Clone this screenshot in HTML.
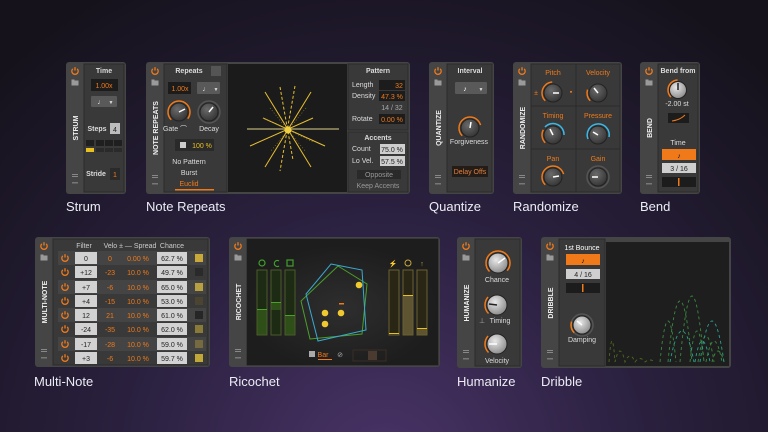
<!DOCTYPE html>
<html><head><meta charset="utf-8"><style>
html,body{margin:0;padding:0;width:768px;height:432px;overflow:hidden;background:#16131d}
svg{display:block}
text{font-family:"Liberation Sans",sans-serif}
</style></head><body>
<svg width="768" height="432" viewBox="0 0 768 432" xmlns="http://www.w3.org/2000/svg">
<defs>
<radialGradient id="bg" cx="384" cy="470" r="560" gradientUnits="userSpaceOnUse">
<stop offset="0" stop-color="#4a3468"/><stop offset="0.45" stop-color="#2b2140"/><stop offset="1" stop-color="#15121b"/>
</radialGradient>
<radialGradient id="kn" cx="0.4" cy="0.35" r="0.7"><stop offset="0" stop-color="#6a6a6a"/><stop offset="1" stop-color="#333"/></radialGradient>
<radialGradient id="knl" cx="0.4" cy="0.35" r="0.7"><stop offset="0" stop-color="#e8e8e8"/><stop offset="1" stop-color="#888"/></radialGradient>
<radialGradient id="disp" cx="0.5" cy="0.55" r="0.5"><stop offset="0" stop-color="#2e2e2e"/><stop offset="1" stop-color="#1d1d1d"/></radialGradient>
<g id="pw"><path d="M-2.2,-2.2 A3.2,3.2 0 1 0 2.2,-2.2" fill="none" stroke="#f07a1a" stroke-width="1.3"/><line x1="0" y1="-3.8" x2="0" y2="-0.5" stroke="#f07a1a" stroke-width="1.3"/></g>
<g id="fd"><rect x="-3.5" y="-2.5" width="7" height="5" fill="#9a9a9a"/><rect x="-3.5" y="-3.5" width="3" height="1.5" fill="#9a9a9a"/></g>
<g id="bi"><rect x="-3" y="-2" width="6" height="1" fill="#888"/><rect x="-3" y="0" width="6" height="1" fill="#888"/><rect x="-3" y="6" width="6" height="1.5" fill="#777"/></g>
</defs>
<rect width="768" height="432" fill="url(#bg)"/>

<g font-size="7" fill="#ddd" text-anchor="middle">
<!-- ===== STRUM ===== -->
<rect x="66" y="62" width="60" height="132" rx="3" fill="#454545"/>
<rect x="84" y="64" width="40" height="128" fill="#393939" stroke="#2a2a2a"/>
<use href="#pw" x="75" y="71"/><use href="#fd" x="75" y="83"/><use href="#bi" x="75" y="176"/>
<text transform="translate(78,128) rotate(-90)" font-size="7" font-weight="bold" fill="#eee">STRUM</text>
<text x="104" y="73" font-weight="bold">Time</text>
<rect x="91" y="79" width="27" height="12" fill="#1c1c1c"/><text x="104" y="88" fill="#f07a1a">1.00x</text>
<rect x="91" y="96" width="26" height="11" rx="1" fill="#595959"/><text x="101" y="104" fill="#fff">♩</text><text x="111" y="104" font-size="5">▼</text>
<text x="97" y="131" font-weight="bold">Steps</text><rect x="110" y="123" width="10" height="11" fill="#bdbdbd"/><text x="115" y="132" fill="#222">4</text>
<g fill="#1f1f1f"><rect x="86" y="140" width="8" height="6"/><rect x="96" y="140" width="8" height="6"/><rect x="105" y="140" width="8" height="6"/><rect x="114" y="140" width="8" height="6"/></g>
<rect x="86" y="148" width="8" height="4" fill="#e8c020"/><g fill="#2a2a2a"><rect x="96" y="148" width="8" height="4"/><rect x="105" y="148" width="8" height="4"/><rect x="114" y="148" width="8" height="4"/></g>
<text x="96" y="176" font-weight="bold">Stride</text><rect x="110" y="168" width="10" height="12" fill="#2a2a2a"/><text x="115" y="177" fill="#f07a1a">1</text>

<!-- ===== NOTE REPEATS ===== -->
<rect x="146" y="62" width="264" height="132" rx="3" fill="#454545"/>
<rect x="164" y="64" width="63" height="128" fill="#393939" stroke="#2a2a2a"/>
<use href="#pw" x="155" y="71"/><use href="#fd" x="155" y="83"/><use href="#bi" x="155" y="177"/>
<text transform="translate(158,128) rotate(-90)" font-weight="bold" fill="#eee">NOTE REPEATS</text>
<text x="189" y="73" font-weight="bold">Repeats</text><rect x="211" y="66" width="10" height="10" fill="#555"/>
<rect x="168" y="82" width="23" height="12" fill="#1c1c1c"/><text x="180" y="91" fill="#f07a1a">1.00x</text>
<rect x="197" y="82" width="23" height="12" rx="1" fill="#595959"/><text x="206" y="91" fill="#fff">♩</text><text x="216" y="91" font-size="5">▼</text>
<circle cx="179" cy="112" r="11" fill="none" stroke="#f07a1a" stroke-width="1.5" stroke-dasharray="50 70" transform="rotate(135 179 112)"/>
<circle cx="179" cy="112" r="9" fill="url(#kn)" stroke="#222"/><line x1="179" y1="112" x2="185" y2="109" stroke="#fff" stroke-width="1.5"/>
<circle cx="209" cy="112" r="11" fill="none" stroke="#555" stroke-width="1.5"/>
<circle cx="209" cy="112" r="9" fill="url(#kn)" stroke="#222"/><line x1="209" y1="112" x2="213" y2="107" stroke="#fff" stroke-width="1.5"/>
<text x="175" y="131">Gate ⌒</text><text x="209" y="131">Decay</text>
<rect x="175" y="139" width="39" height="12" fill="#2a2a2a"/><rect x="180" y="142" width="6" height="6" fill="#ccc"/><text x="202" y="148" fill="#e8c020">100 %</text>
<text x="189" y="164">No Pattern</text><text x="189" y="175">Burst</text><text x="189" y="186" fill="#f07a1a">Euclid</text>
<rect x="175" y="189" width="39" height="1.5" fill="#f07a1a"/>
<rect x="228" y="64" width="119" height="128" fill="#1b1b1b"/>
<g stroke="#e8c030" stroke-width="1">
<line x1="265" y1="92" x2="311" y2="167"/><line x1="311" y1="92" x2="265" y2="167"/>
<line x1="263" y1="118" x2="325" y2="146"/><line x1="313" y1="118" x2="250" y2="146"/>
<line x1="280" y1="87" x2="293" y2="160" stroke-dasharray="3 2"/><line x1="295" y1="86" x2="280" y2="171" stroke-dasharray="3 2"/>
</g>
<g stroke="#a08a30" stroke-width="0.6" stroke-dasharray="1 2"><line x1="263" y1="118" x2="313" y2="142"/><line x1="270" y1="108" x2="306" y2="152"/><line x1="306" y1="108" x2="270" y2="152"/></g>
<line x1="247" y1="129" x2="339" y2="129" stroke="#ddd088" stroke-width="1"/>
<circle cx="288" cy="130" r="3.5" fill="#f0d040"/>
<rect x="348" y="64" width="60" height="66" fill="#393939" stroke="#2a2a2a"/>
<rect x="348" y="132" width="60" height="60" fill="#393939" stroke="#2a2a2a"/>
<text x="378" y="73" font-weight="bold">Pattern</text>
<g text-anchor="start"><text x="352" y="87">Length</text><text x="352" y="98">Density</text><text x="352" y="121">Rotate</text><text x="352" y="151">Count</text><text x="352" y="163">Lo Vel.</text></g>
<rect x="379" y="80" width="26" height="10" fill="#1c1c1c"/><text x="399" y="88" fill="#f07a1a">32</text>
<rect x="379" y="91" width="26" height="10" fill="#1c1c1c"/><text x="392" y="99" fill="#f07a1a">47.3 %</text>
<text x="392" y="110" fill="#aaa">14 / 32</text>
<rect x="379" y="114" width="26" height="10" fill="#1c1c1c"/><text x="392" y="122" fill="#f07a1a">0.00 %</text>
<text x="378" y="140" font-weight="bold">Accents</text>
<rect x="380" y="144" width="25" height="10" fill="#cfcfcf"/><text x="392" y="152" fill="#222">75.0 %</text>
<rect x="380" y="156" width="25" height="10" fill="#cfcfcf"/><text x="392" y="164" fill="#222">57.5 %</text>
<rect x="357" y="170" width="44" height="9" fill="#2a2a2a"/><text x="379" y="177" fill="#999">Opposite</text>
<text x="378" y="188" fill="#999">Keep Accents</text>

<!-- ===== QUANTIZE ===== -->
<rect x="429" y="62" width="65" height="132" rx="3" fill="#454545"/>
<rect x="447" y="64" width="45" height="128" fill="#393939" stroke="#2a2a2a"/>
<use href="#pw" x="438" y="71"/><use href="#fd" x="438" y="83"/><use href="#bi" x="438" y="177"/>
<text transform="translate(441,128) rotate(-90)" font-weight="bold" fill="#eee">QUANTIZE</text>
<text x="470" y="73" font-weight="bold">Interval</text>
<rect x="455" y="82" width="32" height="12" rx="1" fill="#595959"/><text x="465" y="91" fill="#fff">♪</text><text x="481" y="91" font-size="5">▼</text>
<circle cx="470" cy="128" r="11" fill="none" stroke="#f07a1a" stroke-width="1.5" stroke-dasharray="40 70" transform="rotate(135 470 128)"/>
<circle cx="470" cy="128" r="9" fill="url(#kn)" stroke="#222"/><line x1="470" y1="128" x2="471" y2="122" stroke="#fff" stroke-width="1.5"/>
<text x="469" y="144">Forgiveness</text>
<rect x="452" y="166" width="36" height="11" fill="#241c16"/><text x="470" y="174" fill="#e08040">Delay Offs</text>

<!-- ===== RANDOMIZE ===== -->
<rect x="513" y="62" width="109" height="132" rx="3" fill="#454545"/>
<use href="#pw" x="522" y="71"/><use href="#fd" x="522" y="83"/><use href="#bi" x="522" y="177"/>
<text transform="translate(525,128) rotate(-90)" font-weight="bold" fill="#eee">RANDOMIZE</text>
<g fill="#393939" stroke="#2a2a2a">
<rect x="531" y="64" width="45" height="42"/><rect x="576" y="64" width="44" height="42"/>
<rect x="531" y="106" width="45" height="43"/><rect x="576" y="106" width="44" height="43"/>
<rect x="531" y="149" width="45" height="43"/><rect x="576" y="149" width="44" height="43"/></g>
<g fill="#f07a1a"><text x="553" y="75">Pitch</text><text x="598" y="75">Velocity</text><text x="553" y="118">Timing</text><text x="598" y="118">Pressure</text><text x="553" y="161">Pan</text><text x="598" y="161">Gain</text><text x="536" y="95">±</text><text x="571" y="94">▪</text></g>
<g>
<circle cx="553" cy="93" r="11" fill="none" stroke="#f07a1a" stroke-width="1.5" stroke-dasharray="25 70" transform="rotate(135 553 93)"/><circle cx="553" cy="93" r="9" fill="url(#kn)" stroke="#222"/><line x1="553" y1="93" x2="559" y2="93" stroke="#fff" stroke-width="1.5"/>
<circle cx="598" cy="93" r="11" fill="none" stroke="#f07a1a" stroke-width="1.5" stroke-dasharray="12 70" transform="rotate(135 598 93)"/><circle cx="598" cy="93" r="9" fill="url(#kn)" stroke="#222"/><line x1="598" y1="93" x2="594" y2="88" stroke="#fff" stroke-width="1.5"/>
<circle cx="553" cy="135" r="11" fill="none" stroke="#f07a1a" stroke-width="1.5" stroke-dasharray="14 70" transform="rotate(135 553 135)"/><path d="M545,127 A11,11 0 0 1 564,135" fill="none" stroke="#3bb8e6" stroke-width="1.5"/><circle cx="553" cy="135" r="9" fill="url(#kn)" stroke="#222"/><line x1="553" y1="135" x2="550" y2="129" stroke="#fff" stroke-width="1.5"/>
<path d="M588,139 A11,11 0 1 1 609,137" fill="none" stroke="#3bb8e6" stroke-width="1.5"/><circle cx="598" cy="135" r="9" fill="url(#kn)" stroke="#222"/><line x1="598" y1="135" x2="593" y2="132" stroke="#fff" stroke-width="1.5"/>
<circle cx="553" cy="177" r="11" fill="none" stroke="#f07a1a" stroke-width="1.5" stroke-dasharray="40 70" transform="rotate(135 553 177)"/><circle cx="553" cy="177" r="9" fill="url(#kn)" stroke="#222"/><line x1="553" y1="177" x2="559" y2="176" stroke="#fff" stroke-width="1.5"/>
<circle cx="598" cy="177" r="11" fill="none" stroke="#555" stroke-width="1.5"/><circle cx="598" cy="177" r="9" fill="url(#kn)" stroke="#222"/><line x1="598" y1="177" x2="592" y2="177" stroke="#fff" stroke-width="1.5"/>
</g>

<!-- ===== BEND ===== -->
<rect x="640" y="62" width="60" height="132" rx="3" fill="#454545"/>
<rect x="658" y="64" width="40" height="128" fill="#393939" stroke="#2a2a2a"/>
<use href="#pw" x="649" y="71"/><use href="#fd" x="649" y="83"/><use href="#bi" x="649" y="177"/>
<text transform="translate(652,128) rotate(-90)" font-weight="bold" fill="#eee">BEND</text>
<text x="678" y="73" font-weight="bold">Bend from</text>
<circle cx="678" cy="90" r="10" fill="none" stroke="#f07a1a" stroke-width="1.5" stroke-dasharray="23 70" transform="rotate(135 678 90)"/>
<circle cx="678" cy="90" r="8.5" fill="url(#knl)" stroke="#222"/><line x1="678" y1="90" x2="678" y2="83" stroke="#222" stroke-width="1.5"/>
<text x="677" y="106">-2.00 st</text>
<rect x="668" y="113" width="21" height="10" fill="#1c1c1c"/><path d="M672,121 Q680,120 685,115" stroke="#f07a1a" fill="none"/>
<text x="678" y="145">Time</text>
<rect x="662" y="149" width="34" height="11" fill="#f07a1a"/><text x="679" y="158" fill="#111">♪</text>
<rect x="662" y="163" width="34" height="10" fill="#cfcfcf"/><text x="679" y="171" fill="#222">3 / 16</text>
<rect x="662" y="177" width="34" height="10" fill="#1c1c1c"/><rect x="678" y="178" width="1.5" height="8" fill="#f07a1a"/>

<!-- ===== MULTI-NOTE ===== -->
<rect x="35" y="237" width="175" height="130" rx="3" fill="#454545"/>
<rect x="53" y="239" width="155" height="126" fill="#393939" stroke="#2a2a2a"/>
<use href="#pw" x="44" y="246"/><use href="#fd" x="44" y="258"/><use href="#bi" x="44" y="351"/>
<text transform="translate(47,302) rotate(-90)" font-weight="bold" fill="#eee">MULTI-NOTE</text>
<text x="84" y="248" fill="#ccc">Filter</text><text x="130" y="248" fill="#ccc">Velo ± — Spread</text><text x="172" y="248" fill="#ccc">Chance</text>
</g>
<g font-size="7" text-anchor="middle">
<g fill="#444"><rect x="58" y="251" width="148" height="14"/><rect x="58" y="280" width="148" height="14"/><rect x="58" y="308" width="148" height="14"/><rect x="58" y="337" width="148" height="14"/></g>
<use href="#pw" x="65" y="258"/><use href="#pw" x="65" y="272"/><use href="#pw" x="65" y="287"/><use href="#pw" x="65" y="301"/><use href="#pw" x="65" y="315"/><use href="#pw" x="65" y="329"/><use href="#pw" x="65" y="344"/><use href="#pw" x="65" y="358"/>
<g fill="#d2d2d2">
<rect x="75" y="252" width="22" height="12"/><rect x="75" y="266" width="22" height="12"/><rect x="75" y="281" width="22" height="12"/><rect x="75" y="295" width="22" height="12"/><rect x="75" y="309" width="22" height="12"/><rect x="75" y="323" width="22" height="12"/><rect x="75" y="338" width="22" height="12"/><rect x="75" y="352" width="22" height="12"/>
<rect x="157" y="252" width="30" height="12"/><rect x="157" y="266" width="30" height="12"/><rect x="157" y="281" width="30" height="12"/><rect x="157" y="295" width="30" height="12"/><rect x="157" y="309" width="30" height="12"/><rect x="157" y="323" width="30" height="12"/><rect x="157" y="338" width="30" height="12"/><rect x="157" y="352" width="30" height="12"/></g>
<g fill="#222"><text x="86" y="261">0</text><text x="86" y="275">+12</text><text x="86" y="290">+7</text><text x="86" y="304">+4</text><text x="86" y="318">12</text><text x="86" y="332">-24</text><text x="86" y="347">-17</text><text x="86" y="361">+3</text>
<text x="172" y="261">62.7 %</text><text x="172" y="275">49.7 %</text><text x="172" y="290">65.0 %</text><text x="172" y="304">53.0 %</text><text x="172" y="318">61.0 %</text><text x="172" y="332">62.0 %</text><text x="172" y="347">59.0 %</text><text x="172" y="361">59.7 %</text></g>
<g fill="#f07a1a"><text x="110" y="261">0</text><text x="110" y="275">-23</text><text x="110" y="290">-6</text><text x="110" y="304">-15</text><text x="110" y="318">21</text><text x="110" y="332">-35</text><text x="110" y="347">-28</text><text x="110" y="361">-6</text>
<text x="138" y="261">0.00 %</text><text x="138" y="275">10.0 %</text><text x="138" y="290">10.0 %</text><text x="138" y="304">10.0 %</text><text x="138" y="318">10.0 %</text><text x="138" y="332">10.0 %</text><text x="138" y="347">10.0 %</text><text x="138" y="361">10.0 %</text></g>
<rect x="195" y="254" width="8" height="8" fill="#c8a838"/><rect x="195" y="268" width="8" height="8" fill="#2a2a2a"/><rect x="195" y="283" width="8" height="8" fill="#b8a040"/><rect x="195" y="297" width="8" height="8" fill="#4a4430"/><rect x="195" y="311" width="8" height="8" fill="#262626"/><rect x="195" y="325" width="8" height="8" fill="#8a7a38"/><rect x="195" y="340" width="8" height="8" fill="#756a40"/><rect x="195" y="354" width="8" height="8" fill="#c0a838"/>
</g>

<!-- ===== RICOCHET ===== -->
<g font-size="7" text-anchor="middle" fill="#ddd">
<rect x="229" y="237" width="211" height="130" rx="3" fill="#454545"/>
<rect x="247" y="239" width="191" height="126" fill="#222" stroke="#2a2a2a"/>
<rect x="247" y="239" width="191" height="126" fill="url(#disp)"/>
<use href="#pw" x="238" y="246"/><use href="#fd" x="238" y="258"/><use href="#bi" x="238" y="351"/>
<text transform="translate(241,302) rotate(-90)" font-weight="bold" fill="#eee">RICOCHET</text>
<g fill="none" stroke="#3fa02a" stroke-width="1.2"><circle cx="262" cy="263" r="3"/><path d="M279,261 A3,3 0 1 0 279,266"/><rect x="287" y="260" width="6" height="6"/></g>
<g fill="#1d2a14" stroke="#4a5a2a"><rect x="257" y="270" width="10" height="65"/><rect x="271" y="270" width="10" height="65"/><rect x="285" y="270" width="10" height="65"/></g>
<g fill="#2e5018"><rect x="257.5" y="310" width="9" height="24.5"/><rect x="271.5" y="302" width="9" height="8"/><rect x="285.5" y="316" width="9" height="18.5"/></g>
<g fill="#4aa02a"><rect x="257" y="309" width="10" height="1"/><rect x="271" y="302" width="10" height="1"/><rect x="285" y="315" width="10" height="1"/></g>
<g fill="#c8a838"><text x="393" y="266">⚡</text><circle cx="408" cy="263" r="3" fill="none" stroke="#c8a838"/><text x="422" y="266">↑</text></g>
<g fill="#2a2616" stroke="#6a6030"><rect x="389" y="270" width="10" height="65"/><rect x="403" y="270" width="10" height="65"/><rect x="417" y="270" width="10" height="65"/></g>
<g fill="#5e5432"><rect x="403.5" y="295" width="9" height="39.5"/><rect x="417.5" y="329" width="9" height="5.5"/></g>
<g fill="#e8c020"><rect x="389" y="333" width="10" height="1"/><rect x="403" y="295" width="10" height="1"/><rect x="417" y="328" width="10" height="1"/></g>
<polygon points="338,266 367,284 362,334 310,339 301,301" fill="none" stroke="#4aa02a" stroke-width="1"/>
<polygon points="331,264 362,270 366,330 318,341 306,294" fill="none" stroke="#3aaad0" stroke-width="1"/>
<g fill="#f0c830"><circle cx="359" cy="285" r="3.3"/><circle cx="325" cy="313" r="3.3"/><circle cx="341" cy="313" r="3.3"/><circle cx="325" cy="324" r="3.3"/></g>
<rect x="339" y="303" width="5" height="1.5" fill="#f07a1a"/>
<rect x="309" y="351" width="6" height="6" fill="#aaa"/><text x="323" y="357" fill="#f07a1a">Bar</text><rect x="318" y="359" width="14" height="1" fill="#f07a1a"/><text x="340" y="357" fill="#aaa">⊘</text>
<rect x="353" y="350" width="33" height="11" fill="none" stroke="#3a2e26"/><rect x="368" y="351" width="9" height="9" fill="#4a3a30"/>

<!-- ===== HUMANIZE ===== -->
<rect x="457" y="237" width="65" height="131" rx="3" fill="#454545"/>
<rect x="475" y="239" width="45" height="127" fill="#393939" stroke="#2a2a2a"/>
<use href="#pw" x="466" y="246"/><use href="#fd" x="466" y="258"/><use href="#bi" x="466" y="352"/>
<text transform="translate(469,303) rotate(-90)" font-weight="bold" fill="#eee">HUMANIZE</text>
<circle cx="498" cy="263" r="12" fill="none" stroke="#f07a1a" stroke-width="1.5" stroke-dasharray="55 80" transform="rotate(135 498 263)"/>
<circle cx="498" cy="263" r="10" fill="url(#knl)" stroke="#222"/><line x1="498" y1="263" x2="505" y2="258" stroke="#fff" stroke-width="1.5"/>
<text x="497" y="282">Chance</text>
<circle cx="497" cy="305" r="12" fill="none" stroke="#f07a1a" stroke-width="1.5" stroke-dasharray="18 80" transform="rotate(135 497 305)"/>
<circle cx="497" cy="305" r="10" fill="url(#knl)" stroke="#222"/><line x1="497" y1="305" x2="489" y2="304" stroke="#222" stroke-width="1.5"/>
<text x="500" y="323">Timing</text><text x="482" y="323" fill="#aaa">⊥</text>
<circle cx="497" cy="344" r="12" fill="none" stroke="#f07a1a" stroke-width="1.5" stroke-dasharray="18 80" transform="rotate(135 497 344)"/>
<circle cx="497" cy="344" r="10" fill="url(#knl)" stroke="#222"/><line x1="497" y1="344" x2="489" y2="344" stroke="#fff" stroke-width="1.5"/>
<text x="497" y="363">Velocity</text>

<!-- ===== DRIBBLE ===== -->
<rect x="541" y="237" width="190" height="131" rx="3" fill="#454545"/>
<rect x="559" y="239" width="46" height="127" fill="#393939" stroke="#2a2a2a"/>
<rect x="606" y="242" width="123" height="124" fill="#1e1e1e"/>
<use href="#pw" x="550" y="246"/><use href="#fd" x="550" y="258"/><use href="#bi" x="550" y="352"/>
<text transform="translate(553,303) rotate(-90)" font-weight="bold" fill="#eee">DRIBBLE</text>
<text x="582" y="250" fill="#fff">1st Bounce</text>
<rect x="566" y="254" width="34" height="11" fill="#f07a1a"/><text x="583" y="263" fill="#111">♪</text>
<rect x="566" y="269" width="34" height="10" fill="#cfcfcf"/><text x="583" y="277" fill="#222">4 / 16</text>
<rect x="566" y="283" width="34" height="10" fill="#1c1c1c"/><rect x="582" y="284" width="1.5" height="8" fill="#f07a1a"/>
<circle cx="582" cy="325" r="11" fill="none" stroke="#555" stroke-width="1.5"/>
<circle cx="582" cy="325" r="11" fill="none" stroke="#f07a1a" stroke-width="1.5" stroke-dasharray="12 80" transform="rotate(135 582 325)"/>
<circle cx="582" cy="325" r="9" fill="url(#knl)" stroke="#222"/><line x1="582" y1="325" x2="577" y2="321" stroke="#fff" stroke-width="1.5"/>
<text x="582" y="342">Damping</text>
<g fill="none" stroke-width="0.9" stroke-dasharray="3 3">
<path d="M609,362 Q612,320 615,362 Q620,340 625,362 Q630,350 635,362 Q640,355 645,362 Q650,358 655,362" stroke="#4a6a20"/>
<path d="M660,362 Q668,280 676,362 M668,362 Q680,240 692,362 M680,362 Q692,230 704,362 M690,362 Q697,300 704,362 M698,362 Q706,310 714,362 M706,362 Q714,320 722,362 M712,362 Q718,340 724,362" stroke="#3a8a40"/>
<path d="M670,362 Q682,300 694,362 M700,362 Q712,280 724,362 M695,362 Q702,320 710,362" stroke="#2aa090"/>
</g>
</g>

<g font-size="13" fill="#ececf4" font-family="Liberation Sans, sans-serif">
<text x="66" y="211">Strum</text><text x="146" y="211">Note Repeats</text><text x="429" y="211">Quantize</text><text x="513" y="211">Randomize</text><text x="640" y="211">Bend</text>
<text x="34" y="386">Multi-Note</text><text x="229" y="386">Ricochet</text><text x="457" y="386">Humanize</text><text x="541" y="386">Dribble</text>
</g>
</svg>
</body></html>
